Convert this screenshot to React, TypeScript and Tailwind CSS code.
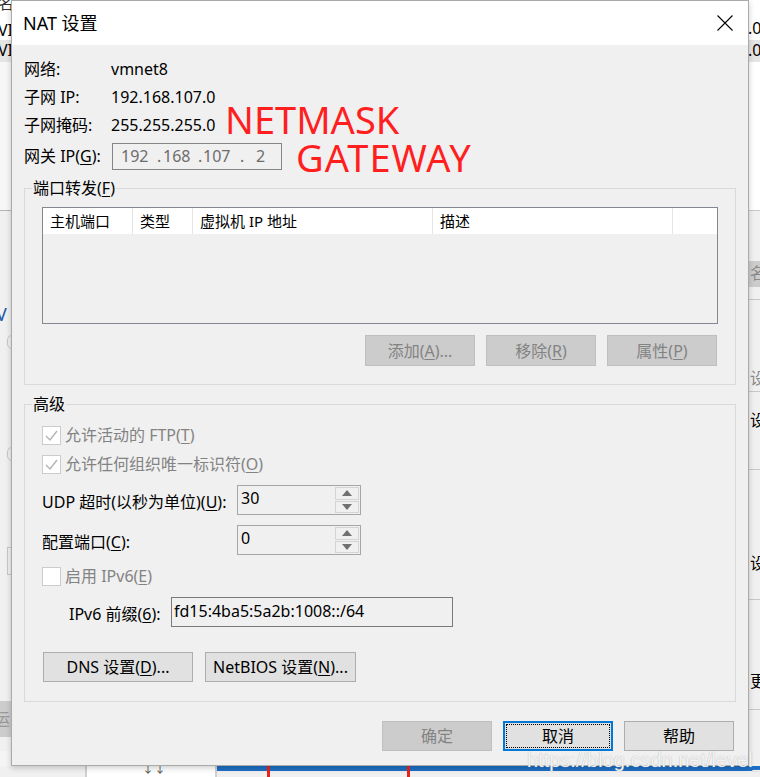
import React from "react";

const FONT = "font-['Noto_Sans','Noto_Sans_CJK_SC',sans-serif]";

function Key({ k }: { k: string }) {
  return <span className="underline underline-offset-2">{k}</span>;
}

function CheckBox({ checked }: { checked?: boolean }) {
  return (
    <span className="w-[19px] h-[19px] border border-[#cccccc] bg-white flex items-center justify-center shrink-0">
      {checked && (
        <svg width="15" height="15" viewBox="0 0 15 15">
          <polyline points="2,8 6,12 13,3" fill="none" stroke="#b3b3b3" strokeWidth="1.4" />
        </svg>
      )}
    </span>
  );
}

function SpinBox({ value }: { value: string }) {
  return (
    <div className="w-[124px] h-[30px] border border-[#a6a6a6] bg-[#f0f0f0] flex">
      <div className="flex-1 pl-[3px] pt-[1px] text-[16px] leading-[22px] text-black">{value}</div>
      <div className="w-[26px] flex flex-col gap-px p-px">
        <span className="flex-1 border border-[#d4d4d4] bg-[#f0f0f0] flex items-center justify-center">
          <svg width="10" height="6" viewBox="0 0 10 6">
            <polygon points="0,6 10,6 5,0" fill="#707070" />
          </svg>
        </span>
        <span className="flex-1 border border-[#d4d4d4] bg-[#f0f0f0] flex items-center justify-center">
          <svg width="10" height="6" viewBox="0 0 10 6">
            <polygon points="0,0 10,0 5,6" fill="#707070" />
          </svg>
        </span>
      </div>
    </div>
  );
}

function Background() {
  return (
    <>
      {/* left strip of the window behind */}
      <div className="absolute left-0 top-0 w-[11px] h-[766px] overflow-hidden bg-[#f5f5f5]">
        <div className="h-[62px] bg-white relative">
          <span className="absolute left-[-2px] top-[-9px] text-[16px] text-[#333]">名</span>
          <span className="absolute left-[-2px] top-[18px] text-[16px] text-black">VI</span>
          <div className="absolute left-0 top-[40px] w-full h-[22px] bg-[#e5e5e5]">
            <span className="absolute left-[-2px] top-[-2px] text-[16px] text-black">VI</span>
          </div>
        </div>
        <div className="h-[148px] bg-[#f7f7f7]" />
        <div className="h-px bg-[#b5b5b5]" />
        <div className="relative h-[540px] bg-[#f0f0f0]">
          <span className="absolute left-[-4px] top-[90px] text-[18px] text-[#1d58a8]">V</span>
          <span className="absolute left-[7px] top-[124px] w-[10px] h-[14px] rounded-full border border-[#c8c8c8]" />
          <span className="absolute left-[7px] top-[236px] w-[10px] h-[14px] rounded-full border border-[#c8c8c8]" />
          <span className="absolute left-[7px] top-[336px] w-[10px] h-[28px] border border-[#c8c8c8]" />
          <span className="absolute left-0 top-[490px] w-full h-[36px] bg-[#cccccc]">
            <span className="absolute left-[-6px] top-[6px] text-[16px] text-[#999]">运</span>
          </span>
        </div>
      </div>

      {/* right strip of the window behind */}
      <div className="absolute left-[749px] top-0 w-[11px] h-[766px] overflow-hidden bg-[#f0f0f0]">
        <div className="h-[62px] bg-white relative">
          <span className="absolute left-[-1px] top-[16px] text-[16px] text-black">.0</span>
          <div className="absolute left-0 top-[40px] w-full h-[22px] bg-[#e5e5e5]">
            <span className="absolute left-[-1px] top-[-2px] text-[16px] text-black">.0</span>
          </div>
        </div>
        <div className="h-[148px] bg-white" />
        <div className="h-px bg-[#c8c8c8]" />
        <div className="relative h-[555px]">
          <span className="absolute left-0 top-[50px] w-full h-[26px] bg-[#cccccc]">
            <span className="absolute left-[1px] top-0 text-[16px] text-[#888]">名</span>
          </span>
          <span className="absolute left-0 top-[88px] w-full h-px bg-[#c8c8c8]" />
          <span className="absolute left-[1px] top-[155px] text-[16px] text-[#888]">设</span>
          <span className="absolute left-0 top-[180px] w-full h-px bg-[#c8c8c8]" />
          <span className="absolute left-[1px] top-[197px] text-[16px] text-black">设</span>
          <span className="absolute left-0 top-[258px] w-full h-px bg-[#c8c8c8]" />
          <span className="absolute left-[1px] top-[340px] text-[16px] text-black">设</span>
          <span className="absolute left-0 top-[388px] w-full h-px bg-[#c8c8c8]" />
          <span className="absolute left-[1px] top-[458px] text-[16px] text-black">更</span>
          <span className="absolute left-0 top-[498px] w-full h-px bg-[#c8c8c8]" />
        </div>
      </div>

      {/* bottom strip */}
      <div className="absolute left-0 top-[766px] w-[760px] h-[11px] flex bg-[#f0f0f0]">
        <div className="w-[85px]" />
        <div className="w-[132px] border-x-2 border-[#d0d0d0] bg-white relative">
          <span className="absolute left-[55px] top-[-3px] text-[12px] leading-none text-[#555]">↓↓</span>
        </div>
        <div className="flex-1 relative">
          <div className="h-[5px] bg-[#1d6fc6]" />
          <span className="absolute left-[50px] top-0 w-[3px] h-[11px] bg-[#e8231f]" />
          <span className="absolute left-[190px] top-0 w-[3px] h-[11px] bg-[#e8231f]" />
        </div>
      </div>
    </>
  );
}

export default function App() {
  return (
    <div className={`relative w-[760px] h-[777px] overflow-hidden bg-white ${FONT}`}>
      <Background />

      {/* NAT dialog */}
      <div className="absolute left-[11px] top-0 w-[738px] h-[766px] border border-[#aaaaaa] bg-[#f0f0f0] flex flex-col shadow-[0_2px_6px_rgba(0,0,0,0.2)]">
        {/* title bar */}
        <div className="h-[44px] bg-white flex items-center justify-between pl-[11px] pr-[15px] shrink-0">
          <span className="text-[18px] text-black leading-none">NAT 设置</span>
          <svg width="16" height="16" viewBox="0 0 16 16">
            <path d="M0.5 0.5 L15.5 15.5 M15.5 0.5 L0.5 15.5" stroke="#000" strokeWidth="1.1" />
          </svg>
        </div>

        <div className="flex-1 flex flex-col px-[12px] pt-[10px] text-[16px] text-black">
          {/* info rows */}
          <div className="flex items-center h-[28px]">
            <span className="w-[87px]">网络:</span>
            <span>vmnet8</span>
          </div>
          <div className="flex items-center h-[28px]">
            <span className="w-[87px]">子网 IP:</span>
            <span>192.168.107.0</span>
          </div>
          <div className="relative flex items-center h-[28px]">
            <span className="w-[87px]">子网掩码:</span>
            <span>255.255.255.0</span>
            <span className="absolute left-[201px] top-[-11px] text-[38px] leading-none text-[#ff1f1f] font-['Noto_Sans',sans-serif]">
              NETMASK
            </span>
          </div>
          <div className="relative flex items-center h-[28px] mt-[3px]">
            <span className="w-[88px]">
              网关 IP(<Key k="G" />):
            </span>
            <div className="w-[170px] h-[27px] border border-[#858585] bg-[#f0f0f0] flex items-center pl-[8px] text-[#6d6d6d]">
              <span className="w-[36px]">192</span>
              <span className="w-[6px]">.</span>
              <span className="w-[35px]">168</span>
              <span className="w-[5px]">.</span>
              <span className="w-[37px]">107</span>
              <span className="w-[16px]">.</span>
              <span>2</span>
            </div>
            <span className="absolute left-[272px] top-[-4px] text-[38px] leading-none tracking-[1px] text-[#ff1f1f] font-['Noto_Sans',sans-serif]">
              GATEWAY
            </span>
          </div>

          {/* port forwarding */}
          <div className="relative mt-[18px] h-[197px] border border-[#dadada] px-[17px] pt-[18px]">
            <span className="absolute left-[7px] top-[-13px] px-px bg-[#f0f0f0] leading-[24px]">
              端口转发(<Key k="F" />)
            </span>
            <div className="h-[117px] border border-[#828790] bg-[#f0f0f0]">
              <div className="h-[26px] bg-white flex text-[15px] leading-[26px]">
                <span className="w-[90px] border-r border-[#e5e5e5] pl-[7px]">主机端口</span>
                <span className="w-[60px] border-r border-[#e5e5e5] pl-[7px]">类型</span>
                <span className="w-[240px] border-r border-[#e5e5e5] pl-[7px]">虚拟机 IP 地址</span>
                <span className="w-[240px] border-r border-[#e5e5e5] pl-[7px]">描述</span>
                <span className="flex-1" />
              </div>
            </div>
            <div className="mt-[11px] flex justify-end gap-[11px] pr-px">
              <button className="w-[110px] h-[31px] bg-[#cccccc] border border-[#bfbfbf] text-[#838383]">
                添加(<Key k="A" />)...
              </button>
              <button className="w-[110px] h-[31px] bg-[#cccccc] border border-[#bfbfbf] text-[#838383]">
                移除(<Key k="R" />)
              </button>
              <button className="w-[110px] h-[31px] bg-[#cccccc] border border-[#bfbfbf] text-[#838383]">
                属性(<Key k="P" />)
              </button>
            </div>
          </div>

          {/* advanced */}
          <div className="relative mt-[19px] h-[298px] border border-[#dadada] pl-[17px] pt-[16px]">
            <span className="absolute left-[7px] top-[-13px] px-px bg-[#f0f0f0] leading-[24px]">高级</span>

            <div className="flex items-center h-[28px] gap-[4px] text-[#838383]">
              <CheckBox checked />
              <span>
                允许活动的 FTP(<Key k="T" />)
              </span>
            </div>
            <div className="flex items-center h-[28px] mt-px gap-[4px] text-[#838383]">
              <CheckBox checked />
              <span>
                允许任何组织唯一标识符(<Key k="O" />)
              </span>
            </div>

            <div className="flex items-center h-[30px] mt-[7px]">
              <span className="w-[195px] pt-[3px]">
                UDP 超时(以秒为单位)(<Key k="U" />):
              </span>
              <SpinBox value="30" />
            </div>
            <div className="flex items-center h-[30px] mt-[10px]">
              <span className="w-[195px] pt-[3px]">
                配置端口(<Key k="C" />):
              </span>
              <SpinBox value="0" />
            </div>

            <div className="flex items-center h-[28px] mt-[7px] gap-[4px] text-[#838383]">
              <CheckBox />
              <span>
                启用 IPv6(<Key k="E" />)
              </span>
            </div>

            <div className="flex items-center h-[30px] mt-[7px] pl-[27px]">
              <span className="w-[102px] pt-[3px]">
                IPv6 前缀(<Key k="6" />):
              </span>
              <div className="w-[282px] h-[30px] border border-[#7a7a7a] bg-[#f0f0f0] pl-[2px] leading-[26px]">
                fd15:4ba5:5a2b:1008::/64
              </div>
            </div>

            <div className="flex mt-[25px] gap-[12px] pl-px">
              <button className="w-[150px] h-[30px] bg-[#e1e1e1] border border-[#adadad]">
                DNS 设置(<Key k="D" />)...
              </button>
              <button className="w-[151px] h-[30px] bg-[#e1e1e1] border border-[#adadad]">
                NetBIOS 设置(<Key k="N" />)...
              </button>
            </div>
          </div>

          {/* dialog buttons */}
          <div className="mt-[19px] flex justify-end gap-[11px] pr-[2px]">
            <button className="w-[110px] h-[30px] bg-[#cccccc] border border-[#bfbfbf] text-[#838383]">确定</button>
            <button className="w-[110px] h-[30px] bg-[#e1e1e1] border-2 border-[#0078d7] p-px">
              <span className="flex w-full h-full items-center justify-center border border-dotted border-black">取消</span>
            </button>
            <button className="w-[110px] h-[30px] bg-[#e1e1e1] border border-[#adadad]">帮助</button>
          </div>
        </div>
      </div>

      {/* watermark */}
      <span className="absolute left-[527px] top-[750px] text-[20px] leading-none whitespace-nowrap text-white/85 font-['Liberation_Sans',sans-serif] [text-shadow:0_0_1px_#a0a0a0]">
        https://blog.csdn.net/level_Tiller
      </span>
    </div>
  );
}
